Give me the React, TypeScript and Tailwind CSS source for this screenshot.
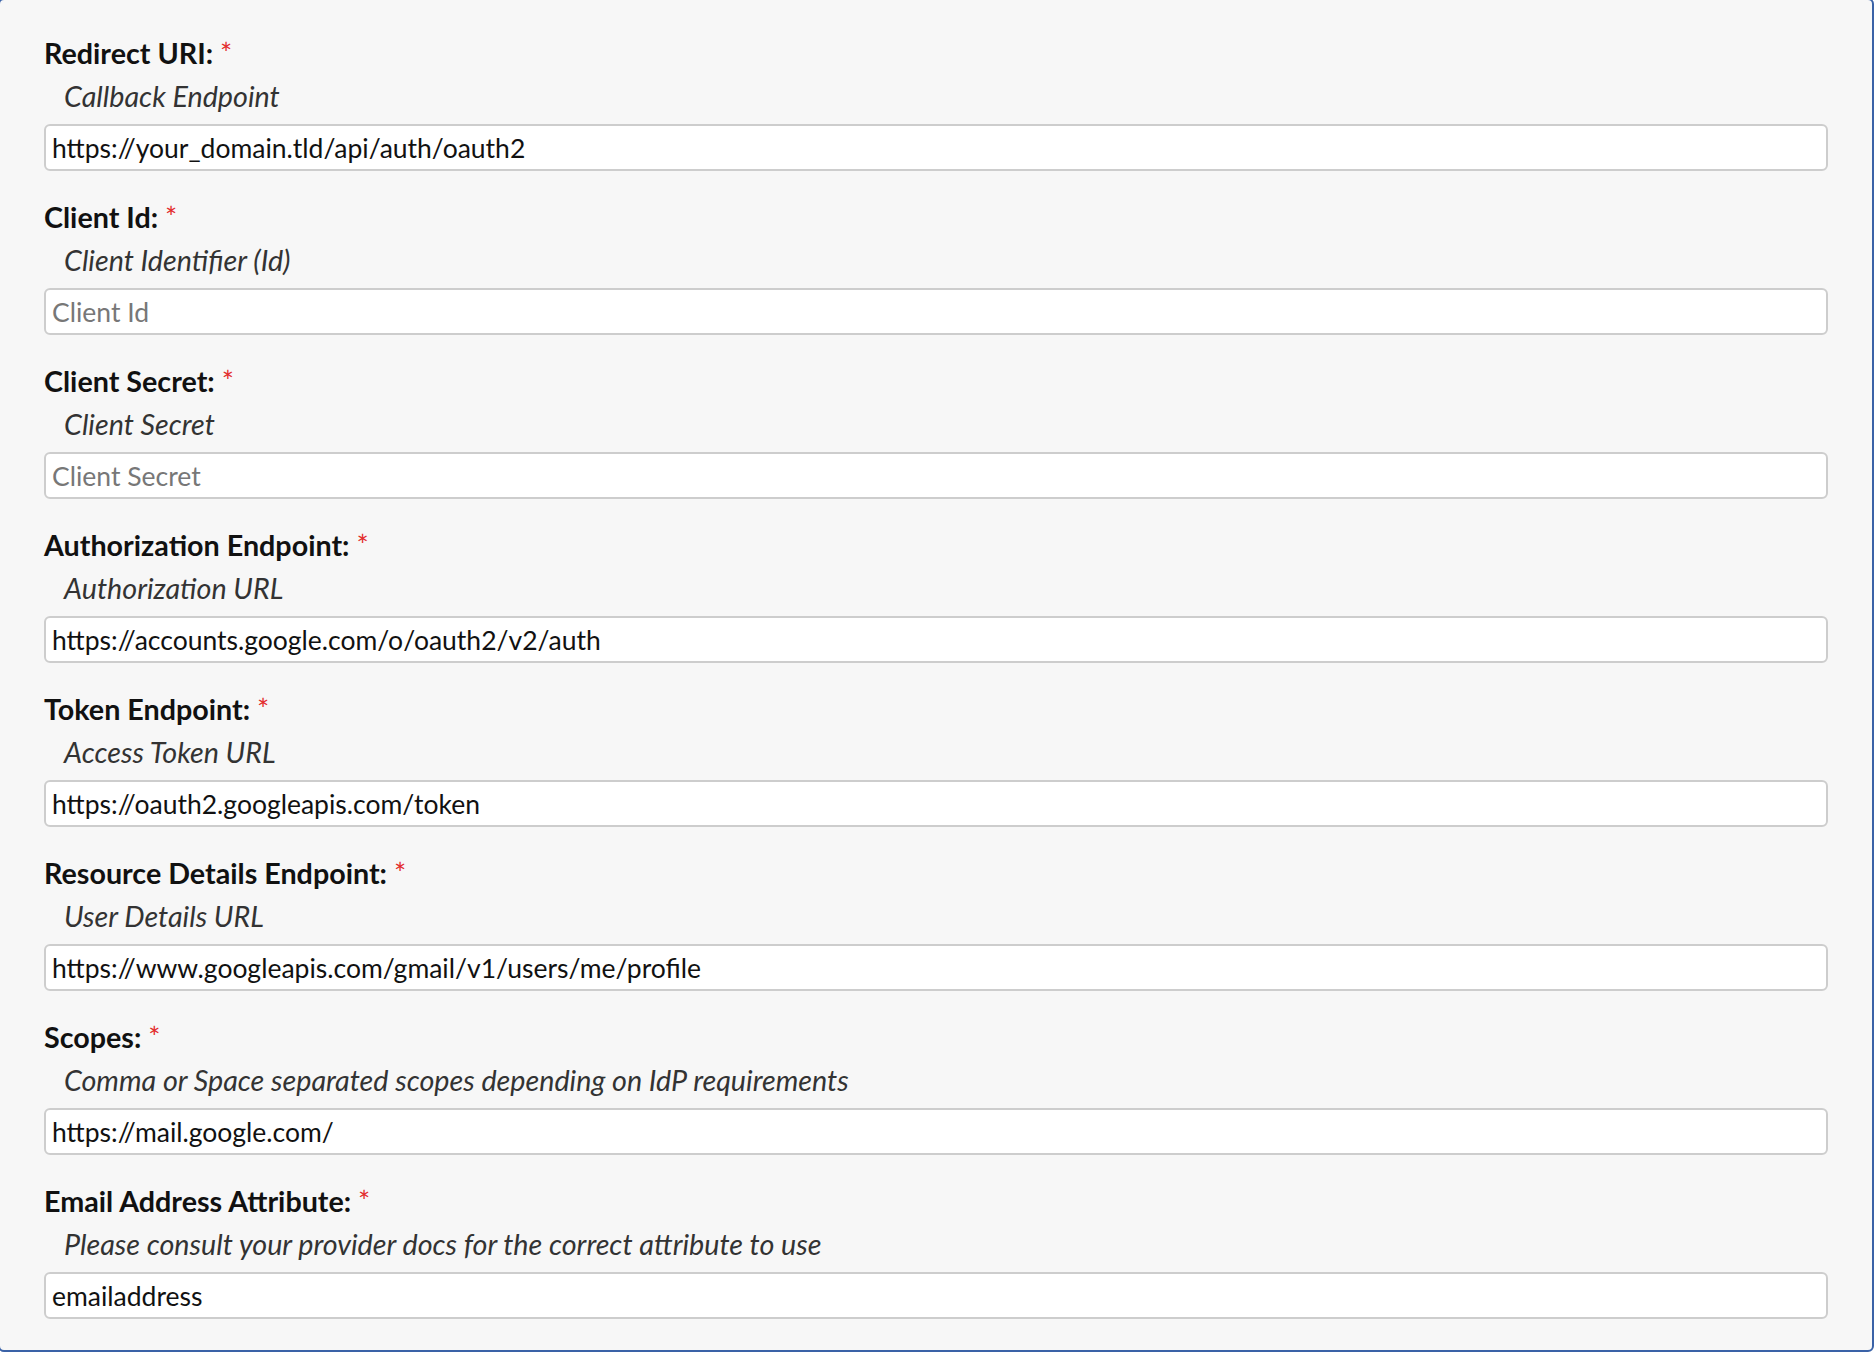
import React from "react";

type Field = {
  label: string;
  desc: string;
  value?: string;
  placeholder?: string;
};

const fields: Field[] = [
  { label: "Redirect URI:", desc: "Callback Endpoint", value: "https://your_domain.tld/api/auth/oauth2" },
  { label: "Client Id:", desc: "Client Identifier (Id)", placeholder: "Client Id" },
  { label: "Client Secret:", desc: "Client Secret", placeholder: "Client Secret" },
  { label: "Authorization Endpoint:", desc: "Authorization URL", value: "https://accounts.google.com/o/oauth2/v2/auth" },
  { label: "Token Endpoint:", desc: "Access Token URL", value: "https://oauth2.googleapis.com/token" },
  { label: "Resource Details Endpoint:", desc: "User Details URL", value: "https://www.googleapis.com/gmail/v1/users/me/profile" },
  { label: "Scopes:", desc: "Comma or Space separated scopes depending on IdP requirements", value: "https://mail.google.com/" },
  { label: "Email Address Attribute:", desc: "Please consult your provider docs for the correct attribute to use", value: "emailaddress" },
];

export default function App() {
  return (
    <div className="w-[1874px] h-[1352px] overflow-hidden bg-white" style={{ fontFamily: "Lato, 'Noto Sans', sans-serif" }}>
      <div className="-ml-[2px] -mt-[2px] w-[1876px] h-[1354px] border-2 border-[#3a62a7] rounded-[6px] bg-[#f7f7f7] px-[44px] pt-[37px]">
        <div className="flex flex-col gap-[30px]">
          {fields.map((f) => (
            <div key={f.label} className="flex flex-col">
              <label className="text-[28.7px] leading-[32px] font-bold text-[#111111]">
                {f.label} <span className="text-[#e32b2b] font-normal">*</span>
              </label>
              <div className="mt-[11px] pl-[20px] text-[28.7px] leading-[32px] italic text-[#333333]">{f.desc}</div>
              <input
                readOnly
                defaultValue={f.value}
                placeholder={f.placeholder}
                className="mt-[12px] h-[47px] w-full rounded-[6px] border-2 border-[#cdcdcd] bg-white px-[6px] text-[26.5px] text-[#111111] placeholder:text-[#777777] outline-none"
                style={{ fontFamily: "Lato, 'Noto Sans', sans-serif" }}
              />
            </div>
          ))}
        </div>
      </div>
    </div>
  );
}
